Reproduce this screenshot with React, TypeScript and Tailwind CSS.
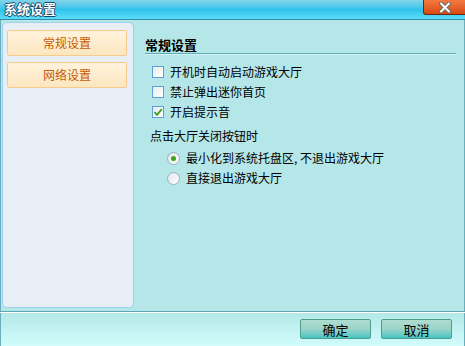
import React from "react";

const font = { fontFamily: '"Noto Sans CJK SC", "Noto Sans", sans-serif' };

function Checkbox({ checked }: { checked?: boolean }) {
  return (
    <div className="w-[12px] h-[12px] border border-[#5d9fd6] bg-gradient-to-br from-[#e6ecf2] to-white flex items-center justify-center shrink-0">
      {checked && (
        <svg width="10" height="10" viewBox="0 0 10 10">
          <path d="M1.5 5.2 L4 7.8 L8.8 2.2" stroke="#3c9e1c" strokeWidth="1.8" fill="none" />
        </svg>
      )}
    </div>
  );
}

function Radio({ checked }: { checked?: boolean }) {
  return (
    <div className="w-[13px] h-[13px] rounded-full border border-[#9eb0bc] bg-gradient-to-br from-[#dfe6ec] to-white flex items-center justify-center shrink-0">
      {checked && <div className="w-[5px] h-[5px] rounded-full bg-[#3da41f]" />}
    </div>
  );
}

export default function App() {
  return (
    <div className="w-[465px] h-[346px] flex flex-col bg-[#b5e6e8] overflow-hidden text-black" style={font}>
      {/* Title bar */}
      <div className="h-[20px] flex items-start justify-between bg-gradient-to-b from-[#82d4e8] via-[#2ec3ea] to-[#5cdcf8] border-b border-[#2c8ea8] shrink-0">
        <div
          className="pl-[4px] text-[13px] leading-[18px] text-white font-bold"
          style={{ textShadow: "1px 0 #174a6a, -1px 0 #174a6a, 0 1px #174a6a, 0 -1px #174a6a" }}
        >
          系统设置
        </div>
        <div className="w-[42px] h-[15px] bg-gradient-to-b from-[#f47a40] to-[#d9470e] border-l border-b border-[#6a2a10] rounded-bl-[3px] flex items-center justify-center">
          <svg width="14" height="11" viewBox="0 0 14 11">
            <path d="M3 1.5 L11 9.5 M11 1.5 L3 9.5" stroke="#6a6a6a" strokeWidth="4" strokeLinecap="round" />
            <path d="M3 1.5 L11 9.5 M11 1.5 L3 9.5" stroke="#ffffff" strokeWidth="2" strokeLinecap="round" />
          </svg>
        </div>
      </div>

      {/* Body */}
      <div className="flex-1 flex border-l border-r border-[#6aaebc] min-h-0">
        {/* Sidebar */}
        <div className="ml-[1px] mt-[2px] w-[132px] h-[286px] rounded-[5px] border border-[#9ed0f2] bg-[#e8eef6] pl-[4px] pr-[6px] pt-[7px] flex flex-col gap-[6px] shrink-0">
          <div className="h-[26px] rounded-[2px] border border-[#f6cc8c] bg-gradient-to-b from-[#fff3dc] to-[#fde6c0] flex items-center justify-center text-[12px] text-[#c75c04]">
            常规设置
          </div>
          <div className="h-[26px] rounded-[2px] border border-[#f6cc8c] bg-gradient-to-b from-[#fff3dc] to-[#fde6c0] flex items-center justify-center text-[12px] text-[#c75c04]">
            网络设置
          </div>
        </div>

        {/* Content */}
        <div className="flex-1 pl-[11px] pr-[8px] pt-[16px] flex flex-col">
          <div className="text-[13px] leading-[17px] font-bold border-b border-[#5eaabb]">常规设置</div>
          <div className="h-[1px] bg-[#d6f4f4]" />
          <div className="pl-[7px] pt-[7px] flex flex-col">
            <div className="h-[20px] flex items-center gap-[6px] text-[12px]">
              <Checkbox />
              <span>开机时自动启动游戏大厅</span>
            </div>
            <div className="h-[20px] flex items-center gap-[6px] text-[12px]">
              <Checkbox />
              <span>禁止弹出迷你首页</span>
            </div>
            <div className="h-[20px] flex items-center gap-[6px] text-[12px]">
              <Checkbox checked />
              <span>开启提示音</span>
            </div>
          </div>
          <div className="pl-[5px] mt-[4px] h-[20px] flex items-center text-[12px]">点击大厅关闭按钮时</div>
          <div className="pl-[22px] pt-[2px] flex flex-col">
            <div className="h-[20px] flex items-center gap-[6px] text-[12px]">
              <Radio checked />
              <span>最小化到系统托盘区, 不退出游戏大厅</span>
            </div>
            <div className="h-[20px] flex items-center gap-[6px] text-[12px]">
              <Radio />
              <span>直接退出游戏大厅</span>
            </div>
          </div>
        </div>
      </div>

      {/* Footer */}
      <div className="h-[1px] bg-[#5aa6b4] shrink-0" />
      <div className="h-[1px] bg-white shrink-0" />
      <div className="h-[33px] shrink-0 flex items-start justify-end gap-[10px] pr-[12px] pt-[6px] bg-gradient-to-b from-[#b5e8e8] to-[#d2fcfc] border-l border-r border-[#6aaebc]">
        <div className="w-[71px] h-[20px] rounded-[2px] border border-[#4f9c8c] bg-gradient-to-b from-[#b0dcd0] via-[#9ad4c8] to-[#3ec6c4] flex items-center justify-center text-[13px] leading-none">
          确定
        </div>
        <div className="w-[71px] h-[20px] rounded-[2px] border border-[#4f9c8c] bg-gradient-to-b from-[#b0dcd0] via-[#9ad4c8] to-[#3ec6c4] flex items-center justify-center text-[13px] leading-none">
          取消
        </div>
      </div>
    </div>
  );
}
